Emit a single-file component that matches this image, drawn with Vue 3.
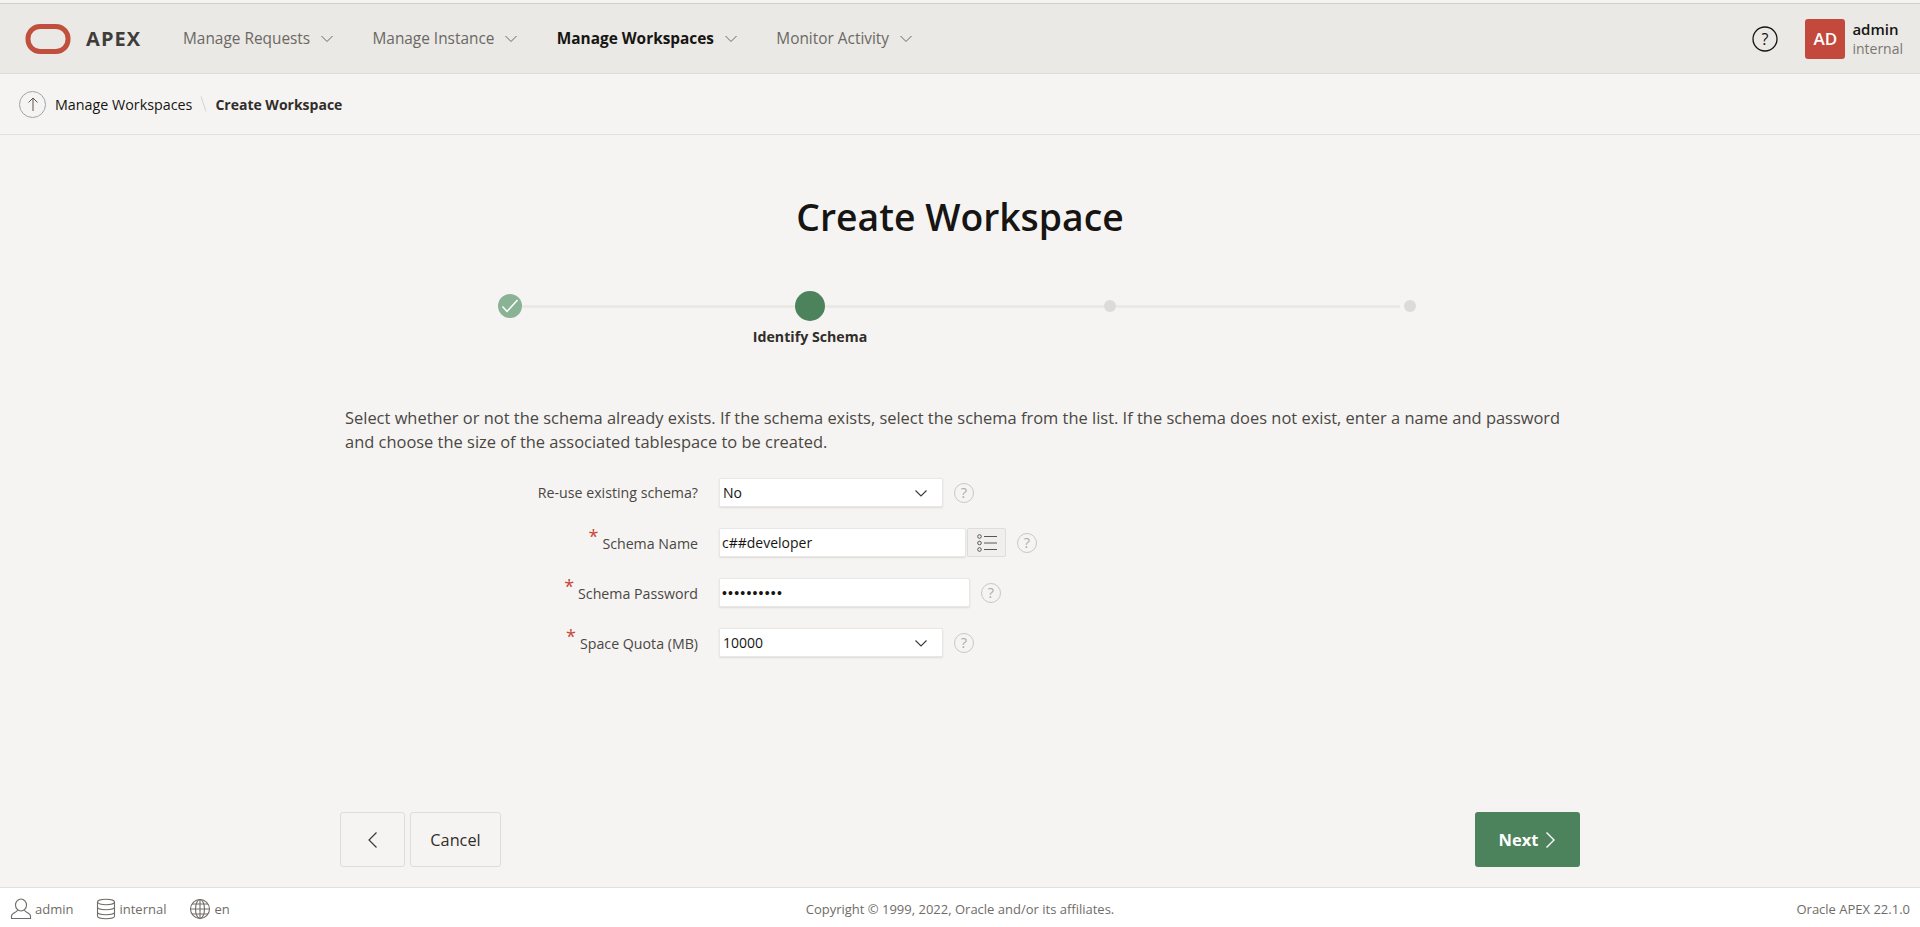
<script setup>
const nav = [
  { label: 'Manage Requests' },
  { label: 'Manage Instance' },
  { label: 'Manage Workspaces', active: true },
  { label: 'Monitor Activity' },
]
const steps = [
  { state: 'done' },
  { state: 'current', label: 'Identify Schema' },
  { state: 'todo' },
  { state: 'todo' },
]
</script>

<template>
  <div class="page">
    <header class="topbar">
      <svg class="logo" width="46" height="30" viewBox="0 0 46 30"><rect x="3" y="2.500" width="40" height="25" rx="12" fill="none" stroke="#c0503d" stroke-width="5"/></svg>
      <span class="brand">APEX</span>
      <nav class="nav">
        <a v-for="n in nav" :key="n.label" class="nav-item" :class="{ active: n.active }">
          {{ n.label }}
          <svg width="14" height="14" viewBox="0 0 14 14"><path d="M1.500 4l5.500 5.500L12.500 4" fill="none" stroke="currentColor" stroke-width="1"/></svg>
        </a>
      </nav>
      <div class="top-right">
        <svg width="26" height="26" viewBox="0 0 26 26"><circle cx="13" cy="13" r="12" fill="none" stroke="#161513" stroke-width="1.300"/><text x="13" y="18.500" text-anchor="middle" class="q">?</text></svg>
        <div class="avatar">AD</div>
        <div class="who"><b>admin</b><span>internal</span></div>
      </div>
    </header>

    <div class="crumbs">
      <span class="up"><svg width="16" height="16" viewBox="0 0 16 16"><path d="M8 15V2M3.500 6.500L8 2l4.500 4.500" fill="none" stroke="#5a5753" stroke-width="1"/></svg></span>
      <span class="crumb">Manage Workspaces</span>
      <svg width="7" height="16" viewBox="0 0 7 16"><path d="M1 .5l5 15" stroke="#d5d3cf" stroke-width="1"/></svg>
      <span class="crumb current">Create Workspace</span>
    </div>

    <main class="main">
      <h1 class="title">Create Workspace</h1>

      <div class="wizard">
        <div class="track"></div>
        <div v-for="(s, i) in steps" :key="i" class="step" :class="s.state">
          <span class="dot">
            <svg v-if="s.state === 'done'" width="18" height="14" viewBox="0 0 18 14"><path d="M1.500 7.500l4.500 5L16.500 1" fill="none" stroke="#fff" stroke-width="1.500"/></svg>
          </span>
          <span v-if="s.label" class="step-label">{{ s.label }}</span>
        </div>
      </div>

      <p class="intro">Select whether or not the schema already exists. If the schema exists, select the schema from the list. If the schema does not exist, enter a name and password and choose the size of the associated tablespace to be created.</p>

      <form class="form">
        <div class="row">
          <label class="lbl">Re-use existing schema?</label>
          <div class="field select"><span>No</span><svg width="14" height="14" viewBox="0 0 14 14"><path d="M1.500 4.500L7 10l5.500-5.500" fill="none" stroke="#3b3936" stroke-width="1.100"/></svg></div>
          <span class="help">?</span>
        </div>
        <div class="row">
          <label class="lbl"><i>*</i>Schema Name</label>
          <div class="field text name"><span>c##developer</span></div>
          <span class="pick">
            <svg width="22" height="20" viewBox="0 0 22 20"><g fill="none" stroke="#5a5753" stroke-width="1"><circle cx="3.500" cy="3.500" r="1.800"/><circle cx="3.500" cy="10" r="1.800"/><circle cx="3.500" cy="16.500" r="1.800"/><path d="M8 3.500h13M8 10h13M8 16.500h13"/></g></svg>
          </span>
          <span class="help">?</span>
        </div>
        <div class="row">
          <label class="lbl"><i>*</i>Schema Password</label>
          <div class="field text pass"><span class="dots">••••••••••</span></div>
          <span class="help">?</span>
        </div>
        <div class="row">
          <label class="lbl"><i>*</i>Space Quota (MB)</label>
          <div class="field select"><span>10000</span><svg width="14" height="14" viewBox="0 0 14 14"><path d="M1.500 4.500L7 10l5.500-5.500" fill="none" stroke="#3b3936" stroke-width="1.100"/></svg></div>
          <span class="help">?</span>
        </div>
      </form>

      <div class="actions">
        <button type="button" class="btn back"><svg width="16" height="18" viewBox="0 0 16 18"><path d="M11.500 1.500L4 9l7.500 7.500" fill="none" stroke="#3b3936" stroke-width="1.200"/></svg></button>
        <button type="button" class="btn cancel">Cancel</button>
        <button type="button" class="btn next">Next <svg width="12" height="18" viewBox="0 0 12 18"><path d="M2.500 1.500L10 9l-7.500 7.500" fill="none" stroke="#fff" stroke-width="1.400"/></svg></button>
      </div>
    </main>

    <footer class="footer">
      <div class="foot-left">
        <span class="foot-item"><svg width="22" height="22" viewBox="0 0 22 22"><g fill="none" stroke="#6f6c68" stroke-width="1.100"><ellipse cx="11" cy="7" rx="5.500" ry="6"/><path d="M7.500 12c-.3 2.500-6 2.500-6 6v2.500h19V18c0-3.500-5.700-3.500-6-6"/></g></svg>admin</span>
        <span class="foot-item"><svg width="20" height="22" viewBox="0 0 20 22"><g fill="none" stroke="#6f6c68" stroke-width="1.100"><ellipse cx="10" cy="4" rx="8.500" ry="2.700"/><path d="M1.500 4v14c0 1.500 3.800 2.700 8.500 2.700s8.500-1.200 8.500-2.700V4M1.500 9c0 1.500 3.800 2.700 8.500 2.700S18.500 10.500 18.500 9M1.500 14c0 1.500 3.800 2.700 8.500 2.700s8.500-1.200 8.500-2.700"/></g></svg>internal</span>
        <span class="foot-item"><svg width="22" height="22" viewBox="0 0 22 22"><g fill="none" stroke="#6f6c68" stroke-width="1.100"><circle cx="11" cy="11" r="9.500"/><ellipse cx="11" cy="11" rx="4.500" ry="9.500"/><path d="M11 1.500v19M1.500 11h19M3 6h16M3 16h16"/></g></svg>en</span>
      </div>
      <div class="copy">Copyright © 1999, 2022, Oracle and/or its affiliates.</div>
      <div class="ver">Oracle APEX 22.1.0</div>
    </footer>
  </div>
</template>

<style>
html, body { margin: 0; background: #f5f4f2; }
</style>

<style scoped>
.page {
  height: 927px;
  padding-top: 3px;
  box-sizing: border-box;
  display: flex;
  flex-direction: column;
  font-family: "Open Sans", "Noto Sans", sans-serif;
  color: #312d2a;
  background: #f5f4f2;
  overflow: hidden;
}
.topbar {
  height: 69px;
  border-top: 1px solid #d0cfcc;
  border-bottom: 1px solid #dfddd9;
  background: #eae9e5;
  display: flex;
  align-items: center;
  padding-left: 25px;
  flex: none;
}
.logo { margin-right: 15px; flex: none; }
.brand { font-size: 20px; font-weight: 700; letter-spacing: 1.100px; color: #3f3d3a; width: 97px; flex: none; }
.nav { display: flex; gap: 38.300px; }
.nav-item { font-size: 15.400px; color: #6b6864; display: flex; align-items: center; gap: 10px; white-space: nowrap; }
.nav-item.active { color: #161513; font-weight: 700; }
.nav-item svg { color: #6b6864; }
.top-right { margin-left: auto; display: flex; align-items: center; padding-right: 17px; }
.q { font-size: 16px; font-family: "Open Sans", sans-serif; fill: #161513; }
.avatar { margin-left: 27px; width: 40px; height: 40px; border-radius: 3px; background: #c2493c; color: #fff; font-weight: 600; font-size: 17px; display: flex; align-items: center; justify-content: center; }
.who { margin-left: 7px; display: flex; flex-direction: column; font-size: 14px; line-height: 19px; }
.who b { font-weight: 600; color: #161513; font-size: 15px; }
.who span { color: #797671; }
.crumbs {
  flex: none;
  height: 60px;
  border-bottom: 1px solid #e2e0dc;
  display: flex;
  align-items: center;
  padding-left: 19px;
  gap: 8px;
}
.up { width: 27px; height: 27px; border: 1px solid #9aa5a8; border-radius: 50%; display: flex; align-items: center; justify-content: center; box-sizing: border-box; margin-right: 1px; }
.crumb { font-size: 14.300px; color: #161513; }
.crumb.current { font-size: 14px; font-weight: 700; color: #312d2a; }
.main { flex: 1; display: flex; flex-direction: column; width: 1240px; margin: 0 auto; position: relative; }
.title { margin: 57px 0 0; text-align: center; font-size: 37.300px; line-height: 50px; font-weight: 600; color: #161513; }
.wizard { position: relative; width: 900px; margin: 37px auto 0; height: 127px; display: flex; justify-content: space-between; }
.track { position: absolute; left: 0; right: 0; top: 26px; margin: 0 10px; height: 3px; background: #ebe9e6; }
.step { position: relative; width: 0; display: flex; flex-direction: column; align-items: center; height: 54px; justify-content: center; }
.dot { border-radius: 50%; flex: none; display: flex; align-items: center; justify-content: center; position: relative; }
.done .dot { width: 24px; height: 24px; background: #8ab294; }
.current .dot { width: 30px; height: 30px; background: #4c825c; }
.todo .dot { width: 12px; height: 12px; background: #dcdbd8; }
.step-label { position: absolute; top: 48px; white-space: nowrap; font-size: 14.200px; font-weight: 700; color: #312d2a; }
.intro { margin: 0 0 0 5px; width: 1225px; font-size: 16.450px; line-height: 24px; color: #4a4743; }
.form { margin-top: 24px; display: flex; flex-direction: column; gap: 21px; }
.row { display: flex; align-items: center; height: 29px; }
.lbl { width: 379px; text-align: right; font-size: 14.200px; color: #4a4743; padding-right: 21px; box-sizing: border-box; flex: none; }
.lbl i { color: #c74634; font-style: normal; font-size: 18px; position: relative; top: -6px; margin-right: 4px; line-height: 1; }
.field { background: #fff; height: 29px; box-sizing: border-box; border: 1px solid #e9e7e4; border-radius: 2px; box-shadow: 0 1px 2px rgba(0,0,0,.1); display: flex; align-items: center; font-size: 14px; color: #161513; flex: none; }
.select { width: 224px; padding: 0 14px 0 3px; justify-content: space-between; }
.text { padding-left: 2px; }
.name { width: 247px; }
.pass { width: 251px; }
.dots { letter-spacing: 1.200px; font-size: 14px; font-family: "Liberation Sans", sans-serif; }
.pick { width: 39px; height: 29px; box-sizing: border-box; margin-left: 1px; border: 1px solid #dfddd9; border-radius: 2px; background: #f1efed; display: flex; align-items: center; justify-content: center; flex: none; }
.help { margin-left: 11px; width: 20px; height: 20px; border: 1px solid #c9c7c3; box-sizing: border-box; border-radius: 50%; font-size: 14.500px; color: #aeaba6; display: flex; align-items: center; justify-content: center; flex: none; }
.actions { margin-top: auto; margin-bottom: 20px; display: flex; gap: 5px; }
.btn { height: 55px; border-radius: 3px; font-family: inherit; font-size: 16px; cursor: pointer; display: flex; align-items: center; justify-content: center; box-sizing: border-box; padding: 0; }
.back, .cancel { background: #f5f4f2; border: 1px solid #dfddd9; color: #312d2a; }
.back { width: 65px; }
.cancel { width: 91px; font-size: 16.300px; }
.next { margin-left: auto; width: 105px; background: #4c825c; border: 0; color: #fff; font-weight: 700; gap: 6px; font-size: 16.500px; }
.footer {
  flex: none;
  height: 40px;
  background: #fff;
  border-top: 1px solid #e2e0dc;
  display: grid;
  grid-template-columns: 1fr auto 1fr;
  align-items: center;
  padding: 2px 10px 0 10px;
  box-sizing: border-box;
  font-size: 13px;
  color: #6f6c68;
}
.foot-left { display: flex; gap: 23px; }
.foot-item { display: flex; align-items: center; gap: 3px; }
.ver { text-align: right; }
</style>
